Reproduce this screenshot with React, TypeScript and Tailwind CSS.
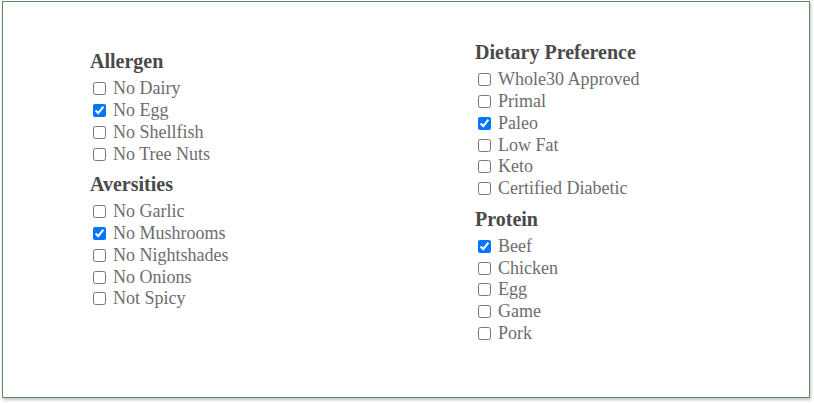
import React from "react";

type Item = { label: string; checked?: boolean };
type Section = { title: string; items: Item[] };

const left: Section[] = [
  {
    title: "Allergen",
    items: [
      { label: "No Dairy" },
      { label: "No Egg", checked: true },
      { label: "No Shellfish" },
      { label: "No Tree Nuts" },
    ],
  },
  {
    title: "Aversities",
    items: [
      { label: "No Garlic" },
      { label: "No Mushrooms", checked: true },
      { label: "No Nightshades" },
      { label: "No Onions" },
      { label: "Not Spicy" },
    ],
  },
];

const right: Section[] = [
  {
    title: "Dietary Preference",
    items: [
      { label: "Whole30 Approved" },
      { label: "Primal" },
      { label: "Paleo", checked: true },
      { label: "Low Fat" },
      { label: "Keto" },
      { label: "Certified Diabetic" },
    ],
  },
  {
    title: "Protein",
    items: [
      { label: "Beef", checked: true },
      { label: "Chicken" },
      { label: "Egg" },
      { label: "Game" },
      { label: "Pork" },
    ],
  },
];

function Group({ s, first }: { s: Section; first: boolean }) {
  return (
    <div className={first ? "" : "mt-[7px]"}>
      <h3 className="text-[20px] leading-[24px] font-bold text-[#4a4a4a] mb-[5px] font-['Liberation_Serif',serif]">
        {s.title}
      </h3>
      <div className="flex flex-col">
        {s.items.map((it) => (
          <label key={it.label} className="flex items-center h-[21.75px]">
            <input
              type="checkbox"
              defaultChecked={it.checked}
              className="m-0 ml-[3px] mr-[7px] w-[13px] h-[13px]"
            />
            <span className="text-[18px] leading-[21px] text-[#6d6d6d] font-['Liberation_Serif',serif]">
              {it.label}
            </span>
          </label>
        ))}
      </div>
    </div>
  );
}

export default function App() {
  return (
    <div className="w-[814px] h-[403px] bg-white pt-[1px] pl-[2px]">
      <div className="w-[808px] h-[397px] border-[1.5px] border-[#5a8c5e] bg-white shadow-[1px_2px_3px_rgba(0,0,0,0.25)] flex pl-[87px]">
        <div className="w-[385px] pt-[47px] flex flex-col">
          {left.map((s, i) => (
            <Group key={s.title} s={s} first={i === 0} />
          ))}
        </div>
        <div className="pt-[38px] flex flex-col">
          {right.map((s, i) => (
            <Group key={s.title} s={s} first={i === 0} />
          ))}
        </div>
      </div>
    </div>
  );
}
